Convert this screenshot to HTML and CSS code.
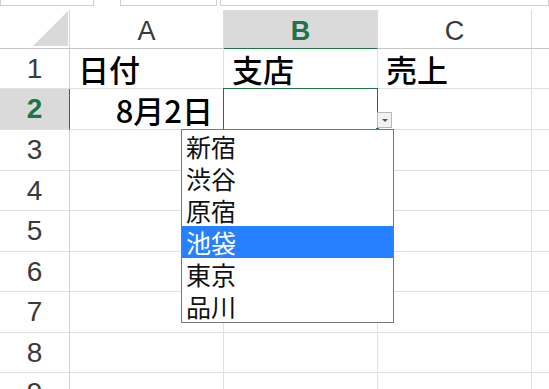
FILE: index.html
```html
<!DOCTYPE html>
<html lang="ja">

<head>
  <meta charset="UTF-8">
  <meta name="viewport" content="width=device-width, initial-scale=1.0">
  <title>入力規則</title>
  <link rel="stylesheet" href="styles.css">
</head>

<body>
  <div class="formula-bar">
    <div class="name-box"></div>
    <div class="fx-box"></div>
    <div class="input-box"></div>
  </div>

  <div class="sheet">
    <!-- 列見出し -->
    <div class="corner"><div class="corner-tri"></div></div>
    <div class="col-head">A</div>
    <div class="col-head active">B</div>
    <div class="col-head">C</div>
    <div class="col-head last"></div>

    <!-- 1行目 -->
    <div class="row-head">1</div>
    <div class="cell">日付</div>
    <div class="cell">支店</div>
    <div class="cell">売上</div>
    <div class="cell last"></div>

    <!-- 2行目 -->
    <div class="row-head active">2</div>
    <div class="cell right">8月2日</div>
    <div class="cell selected">
      <span class="fill-handle"></span>
      <span class="drop-btn"></span>
      <ul class="drop-list">
        <li>新宿</li>
        <li>渋谷</li>
        <li>原宿</li>
        <li class="hover">池袋</li>
        <li>東京</li>
        <li>品川</li>
      </ul>
    </div>
    <div class="cell"></div>
    <div class="cell last"></div>

    <div class="row-head">3</div>
    <div class="cell"></div><div class="cell"></div><div class="cell"></div><div class="cell last"></div>
    <div class="row-head">4</div>
    <div class="cell"></div><div class="cell"></div><div class="cell"></div><div class="cell last"></div>
    <div class="row-head">5</div>
    <div class="cell"></div><div class="cell"></div><div class="cell"></div><div class="cell last"></div>
    <div class="row-head">6</div>
    <div class="cell"></div><div class="cell"></div><div class="cell"></div><div class="cell last"></div>
    <div class="row-head">7</div>
    <div class="cell"></div><div class="cell"></div><div class="cell"></div><div class="cell last"></div>
    <div class="row-head">8</div>
    <div class="cell"></div><div class="cell"></div><div class="cell"></div><div class="cell last"></div>
    <div class="row-head">9</div>
    <div class="cell"></div><div class="cell"></div><div class="cell"></div><div class="cell last"></div>
  </div>
</body>

</html>
```

FILE: styles.css
```css
* {
  margin: 0;
  padding: 0;
  box-sizing: border-box;
}

body {
  width: 549px;
  height: 389px;
  overflow: hidden;
  background: #ffffff;
  font-family: "Noto Sans CJK JP", "Liberation Sans", sans-serif;
}

/* 数式バー（上端だけ見えている） */
.formula-bar {
  height: 10px;
  display: flex;
}

.formula-bar div {
  height: 6px;
  border: 1px solid #cfcfcf;
  border-top: none;
  background: #fff;
}

.formula-bar .name-box {
  width: 94px;
}

.formula-bar .fx-box {
  width: 97px;
  margin-left: 26px;
}

.formula-bar .input-box {
  flex: 1;
  margin-left: 3px;
}

/* シート */
.sheet {
  display: grid;
  grid-template-columns: 70px 154px 154px 154px 1fr;
  grid-template-rows: 39px 40px 41px 41px 40px 41px 40px 41px 40px 41px;
  overflow: hidden;
}

.corner {
  display: flex;
  justify-content: flex-end;
  align-items: flex-end;
  padding: 0 1px 2px 0;
  border-right: 1px solid #d4d4d4;
  border-bottom: 1px solid #c6c6c6;
}

.corner-tri {
  width: 35px;
  height: 35px;
  background: #d9d9d9;
  clip-path: polygon(100% 0, 100% 100%, 0 100%);
}

.col-head {
  display: flex;
  justify-content: center;
  align-items: flex-end;
  font-family: "Liberation Sans", sans-serif;
  font-size: 27px;
  line-height: 34px;
  color: #3a3a3a;
  border-right: 1px solid #dcdcdc;
  border-bottom: 1px solid #c6c6c6;
}

.col-head.active {
  background: #dadada;
  color: #217346;
  font-weight: bold;
  border-bottom: 1px solid #217346;
}

.col-head.last {
  border-right: none;
}

.row-head {
  display: flex;
  justify-content: center;
  align-items: center;
  font-family: "Liberation Sans", sans-serif;
  font-size: 28px;
  color: #3a3a3a;
  border-right: 1px solid #d0d0d0;
  border-bottom: 1px solid #e1e1e1;
}

.row-head.active {
  background: #dadada;
  color: #217346;
  font-weight: bold;
  border-right: 1px solid #217346;
}

.cell {
  position: relative;
  display: flex;
  align-items: flex-end;
  padding: 0 10px 0 8px;
  font-size: 31px;
  font-weight: 500;
  line-height: 38px;
  color: #000;
  border-right: 1px solid #e1e1e1;
  border-bottom: 1px solid #e1e1e1;
}

.cell.right {
  justify-content: flex-end;
}

.cell.last {
  border-right: none;
}

.cell.selected {
  border: 1px solid #217346;
  margin-left: -1px;
  margin-top: -1px;
  z-index: 2;
}

.fill-handle {
  position: absolute;
  right: -3px;
  bottom: -3px;
  width: 5px;
  height: 5px;
  background: #217346;
  border: 1px solid #fff;
}

/* 入力規則のボタン */
.drop-btn {
  position: absolute;
  left: 100%;
  top: 23px;
  width: 15px;
  height: 16px;
  background: #f2f2f2;
  border: 1px solid #b8b8b8;
  display: flex;
  justify-content: center;
  align-items: center;
}

.drop-btn::after {
  content: "";
  border-left: 3px solid transparent;
  border-right: 3px solid transparent;
  border-top: 3px solid #555;
}

/* リスト */
.drop-list {
  position: absolute;
  left: -43px;
  top: 40px;
  width: 213px;
  list-style: none;
  background: #fff;
  border: 1px solid #777;
  z-index: 3;
}

.drop-list li {
  height: 32px;
  line-height: 32px;
  padding-left: 4px;
  font-size: 25px;
  font-weight: 400;
  color: #111;
}

.drop-list li.hover {
  background: #2680ff;
  color: #fff;
}
```
